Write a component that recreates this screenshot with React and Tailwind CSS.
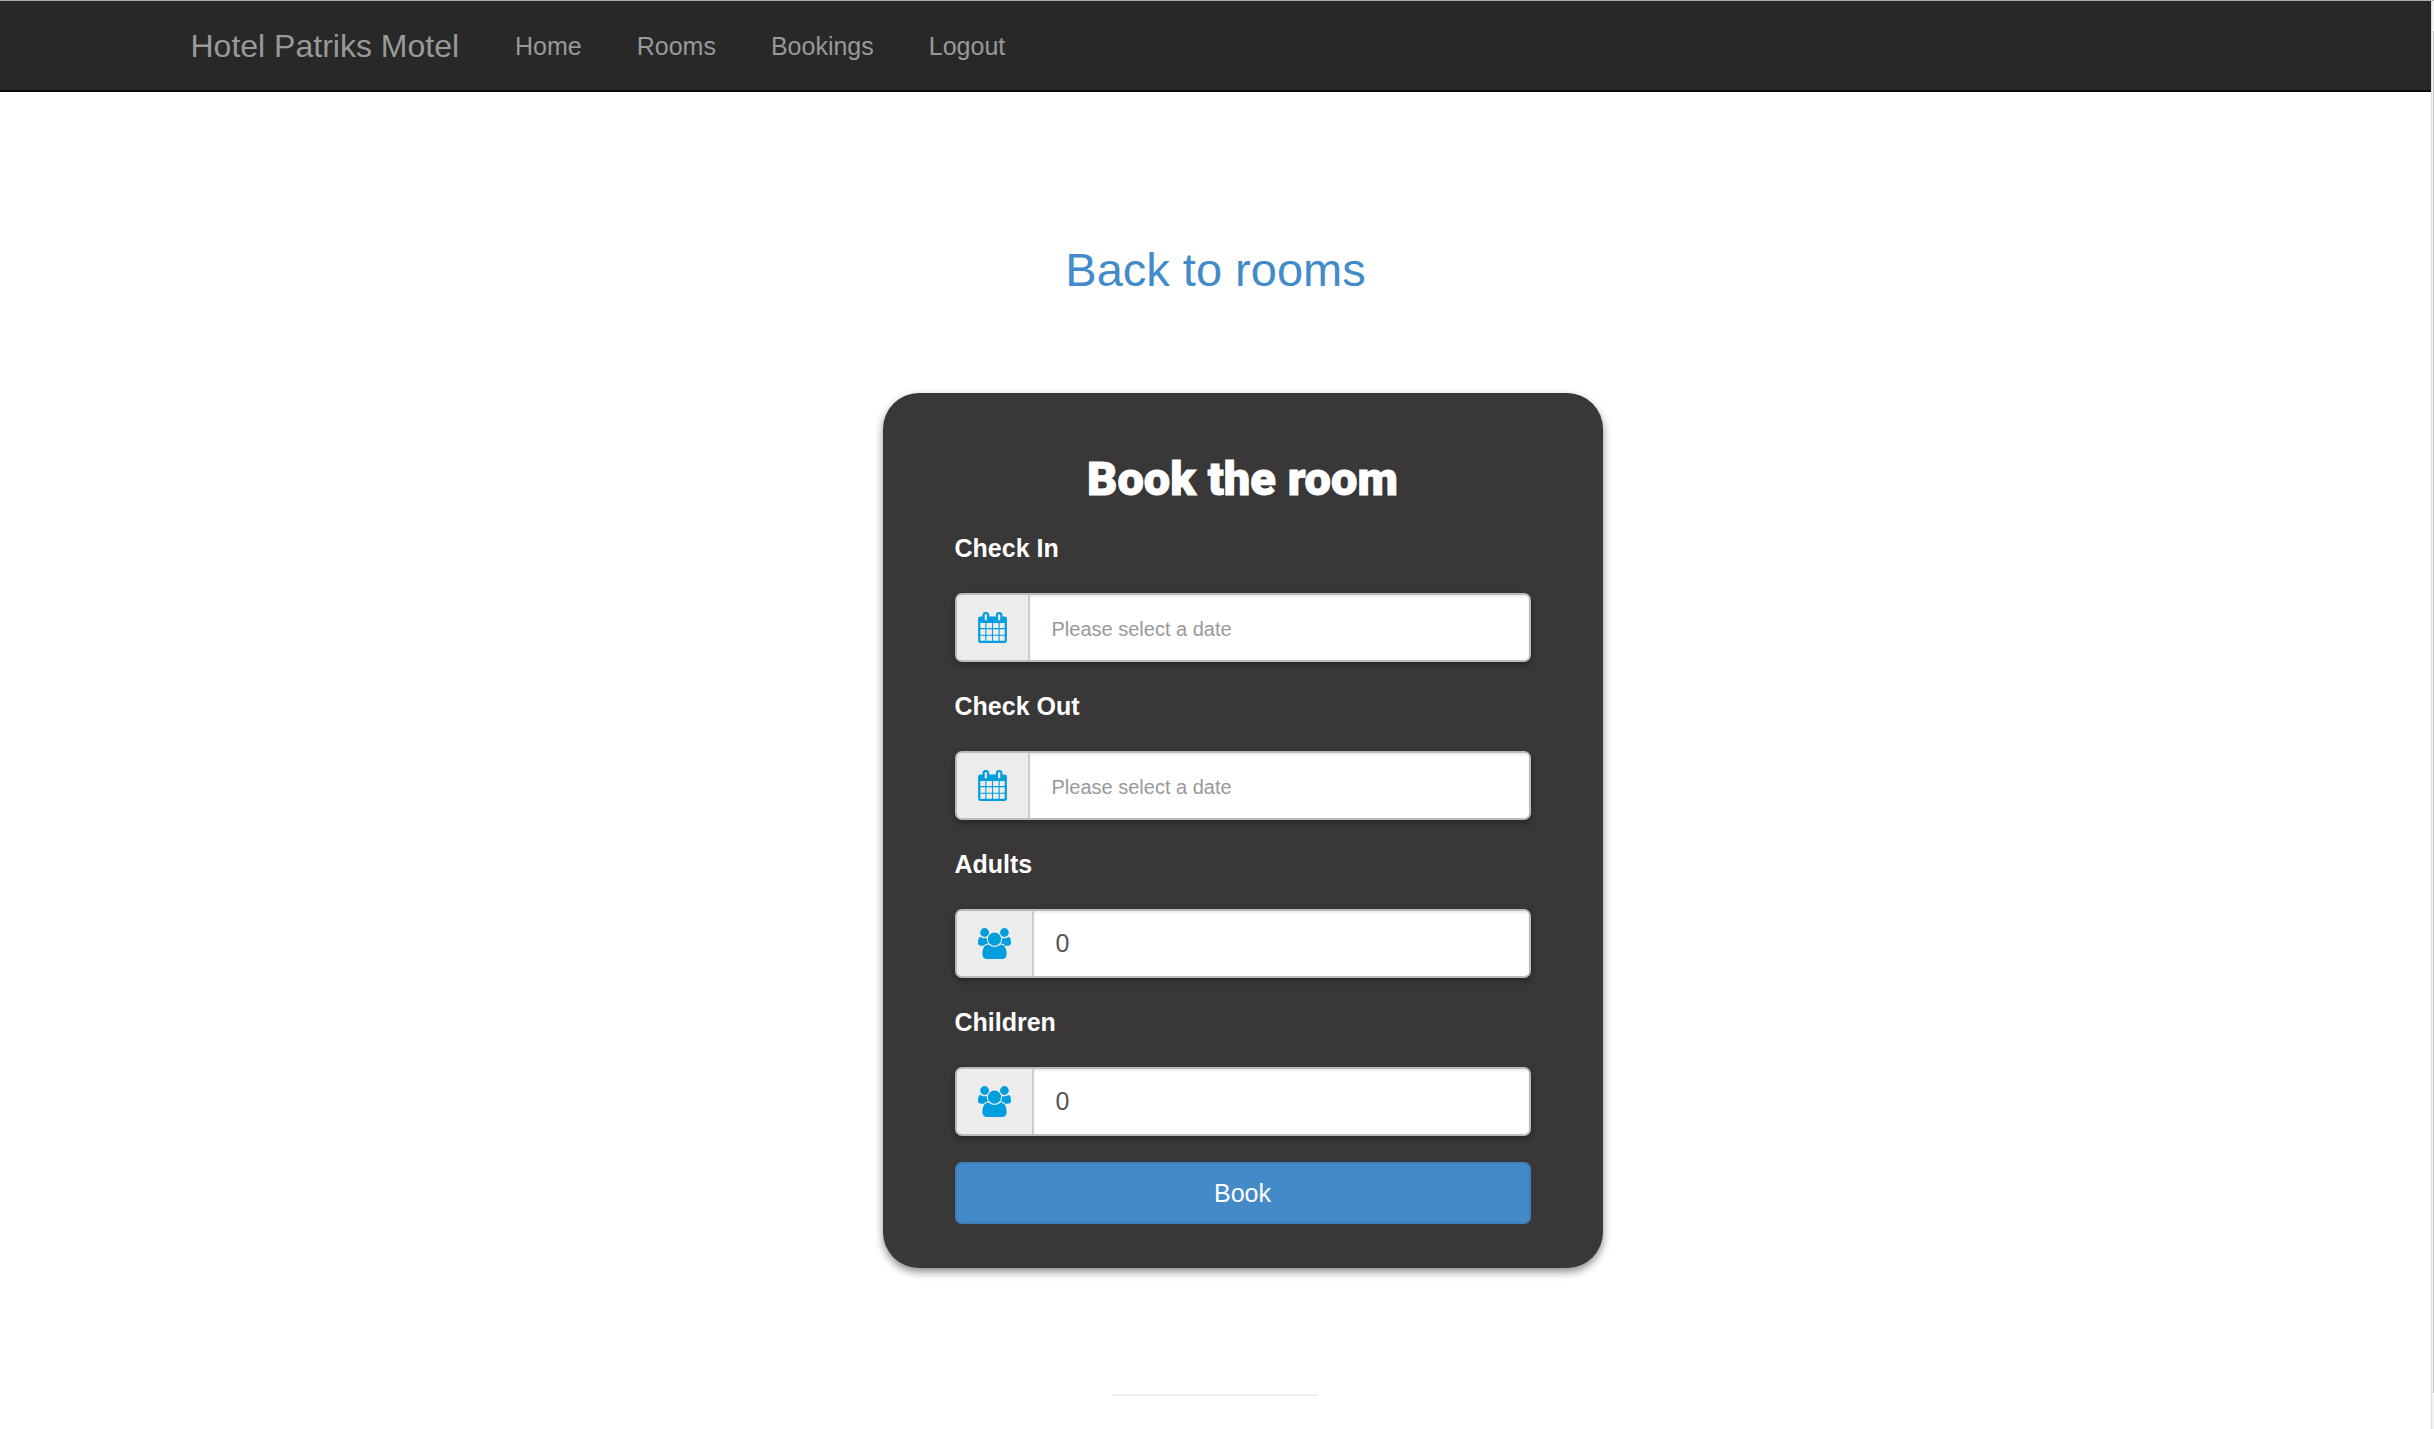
const calendarPath =
  "M192 1664h288v-288h-288v288zm352 0h320v-288h-320v288zm-352-352h288v-320h-288v320zm352 0h320v-320h-320v320zm-352-384h288v-288h-288v288zm736 736h320v-288h-320v288zm-384-736h320v-288h-320v288zm768 736h288v-288h-288v288zm-384-352h320v-320h-320v320zm-352-864v-288q0-13-9.5-22.5t-22.5-9.5h-64q-13 0-22.5 9.5t-9.5 22.5v288q0 13 9.5 22.5t22.5 9.5h64q13 0 22.5-9.5t9.5-22.5zm736 864h288v-320h-288v320zm-384-384h320v-288h-320v288zm384 0h288v-288h-288v288zm32-480v-288q0-13-9.5-22.5t-22.5-9.5h-64q-13 0-22.5 9.5t-9.5 22.5v288q0 13 9.5 22.5t22.5 9.5h64q13 0 22.5-9.5t9.5-22.5zm384-64v1280q0 52-38 90t-90 38h-1408q-52 0-90-38t-38-90v-1280q0-52 38-90t90-38h128v-96q0-66 47-113t113-47h64q66 0 113 47t47 113v96h384v-96q0-66 47-113t113-47h64q66 0 113 47t47 113v96h128q52 0 90 38t38 90z";

const usersPath =
  "M657 896q-162 5-265 128h-134q-82 0-138-40.5t-56-118.5q0-353 124-353 6 0 43.5 21t97.5 42.5 119 21.5q67 0 133-23-5 37-5 66 0 139 81 256zm1071 637q0 120-73 189.5t-194 69.5h-874q-121 0-194-69.5t-73-189.5q0-53 3.5-103.5t14-109 26.5-108.5 43-97.5 62-81 85.5-53.5 111.5-20q10 0 43 21.5t73 48 107 48 135 21.5 135-21.5 107-48 73-48 43-21.5q61 0 111.5 20t85.5 53.5 62 81 43 97.5 26.5 108.5 14 109 3.5 103.5zm-1024-1277q0 106-75 181t-181 75-181-75-75-181 75-181 181-75 181 75 75 181zm704 384q0 159-112.5 271.5t-271.5 112.5-271.5-112.5-112.5-271.5 112.5-271.5 271.5-112.5 271.5 112.5 112.5 271.5zm576 225q0 78-56 118.5t-138 40.5h-134q-103-123-265-128 81-117 81-256 0-29-5-66 66 23 133 23 59 0 119-21.5t97.5-42.5 43.5-21q124 0 124 353zm-128-609q0 106-75 181t-181 75-181-75-75-181 75-181 181-75 181 75 75 181z";

function CalendarIcon() {
  return (
    <svg viewBox="64 0 1664 1792" className="h-[31px] w-[29px] fill-[#009edf]" aria-hidden="true">
      <path d={calendarPath} />
    </svg>
  );
}

function UsersIcon() {
  return (
    <svg viewBox="64 0 1920 1792" className="h-[31px] w-[33px] fill-[#009edf]" aria-hidden="true">
      <path d={usersPath} />
    </svg>
  );
}

function Field({ id, label, icon, inputClass, ...inputProps }) {
  return (
    <div className="mb-[26px]">
      <label htmlFor={id} className="mb-[27px] block text-[25px] leading-9 font-bold text-white">
        {label}
      </label>
      <div className="flex h-[69px] overflow-hidden rounded-[7px] border-2 border-[#bbb] bg-white shadow-[0_3px_6px_rgba(0,0,0,0.3)]">
        <span className="flex shrink-0 items-center border-r-2 border-[#ccc] bg-[#ececec] px-[21px]">
          {icon}
        </span>
        <input
          id={id}
          className={`min-w-0 flex-1 bg-white px-[22px] text-[#555] shadow-[inset_0_2px_2px_rgba(0,0,0,0.08)] outline-none placeholder:text-[#999] placeholder:opacity-100 ${inputClass}`}
          {...inputProps}
        />
      </div>
    </div>
  );
}

const links = ["Home", "Rooms", "Bookings", "Logout"];

export default function App() {
  return (
    <div className="flex min-h-screen bg-white font-['Liberation_Sans',Arial,sans-serif]">
      <div className="flex min-w-0 flex-1 flex-col">
        <header className="border-t border-b-2 border-t-[#a9aeac] border-b-[#0c0c0c] bg-[#282828]">
          <nav className="mx-auto flex h-[89px] max-w-[2106px] items-center px-7 text-[#999]">
            <a href="#" className="mr-[56px] text-[32px] leading-9">
              Hotel Patriks Motel
            </a>
            <ul className="flex gap-[55px] text-[25px] leading-9">
              {links.map((link) => (
                <li key={link}>
                  <a href="#">{link}</a>
                </li>
              ))}
            </ul>
          </nav>
        </header>

        <main className="flex flex-col items-center pt-[152px]">
          <a href="#" className="text-[47px] leading-[52px] text-[#428bca]">
            Back to rooms
          </a>

          <form className="mt-[97px] ml-[54px] w-full max-w-[720px] rounded-[36px] bg-[#393738] px-[72px] pt-14 pb-11 shadow-[0_4px_8px_rgba(0,0,0,0.45)]">
            <h1 className="mb-[21px] text-center font-[Roboto,sans-serif] text-[47px] leading-[60px] font-black text-white [-webkit-text-stroke:1px_white]">
              Book the room
            </h1>
            <Field
              id="check-in"
              label="Check In"
              icon={<CalendarIcon />}
              type="text"
              placeholder="Please select a date"
              inputClass="pt-[2px] text-[20px]"
            />
            <Field
              id="check-out"
              label="Check Out"
              icon={<CalendarIcon />}
              type="text"
              placeholder="Please select a date"
              inputClass="pt-[2px] text-[20px]"
            />
            <Field id="adults" label="Adults" icon={<UsersIcon />} type="number" min="0" defaultValue="0" inputClass="text-[25px]" />
            <Field id="children" label="Children" icon={<UsersIcon />} type="number" min="0" defaultValue="0" inputClass="text-[25px]" />
            <button
              type="button"
              className="block h-[62px] w-full rounded-[7px] border-2 border-[#3d80bb] bg-[#448ac9] text-[25px] leading-9 text-white"
            >
              Book
            </button>
          </form>

          <hr className="mt-[126px] w-[205px] border-t-2 border-[#eee]" />
        </main>
      </div>
      <div className="flex w-[3px] flex-col border-t border-l border-t-[#a9aeac] border-l-[#dcdcdc] bg-[#f1f1f1] pt-[30px] pb-9 pl-px">
        <div className="flex-1 bg-[#c1c1c1]" />
      </div>
    </div>
  );
}
